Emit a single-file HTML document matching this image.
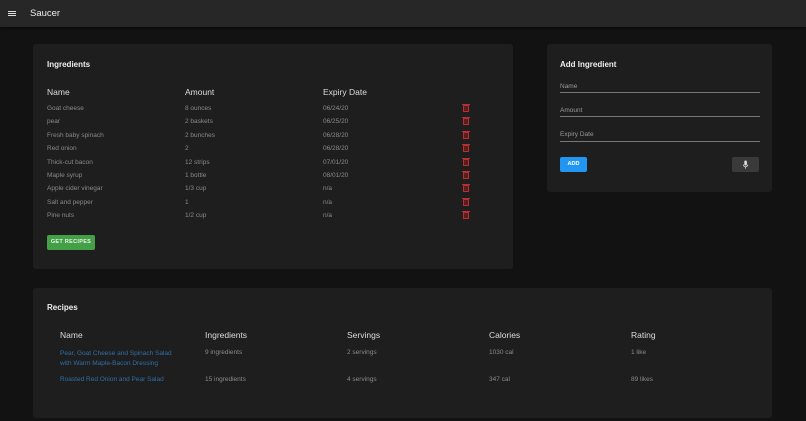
<!DOCTYPE html>
<html><head><style>
*{margin:0;padding:0;box-sizing:border-box}
body{width:806px;height:421px;background:#121212;font-family:"Liberation Sans",sans-serif;position:relative;overflow:hidden;color:#fff}
.hdr{position:absolute;left:0;top:0;width:806px;height:27px;background:#272727;box-shadow:0 1px 3px rgba(0,0,0,.6)}
.card{position:absolute;background:#1e1e1e;border-radius:3px}
.t{position:absolute;white-space:nowrap}
.h{font-size:8.5px;color:#ddd}
.c{font-size:6.5px;color:#8a8a8a}
.trash{position:absolute;width:6px;height:7px;border:1px solid #b83030;background:#5a1c1c}
.trash:before{content:"";position:absolute;left:-2px;top:-2.5px;width:8px;height:1px;background:#b83030}
.line{position:absolute;height:1px;background:#777}
</style></head><body>
<div class="hdr">
<div style="position:absolute;left:8px;top:11px;width:8px;height:1.2px;background:#ddd;box-shadow:0 2px 0 #ddd,0 4px 0 #ddd"></div>
<div class="t" style="left:30px;top:8px;font-size:9.5px;color:#eee">Saucer</div>
</div>

<div class="card" style="left:33px;top:44px;width:480px;height:225px"></div>
<div class="t" style="left:47px;top:60px;font-size:8px;font-weight:bold;color:#eee">Ingredients</div>
<div class="t h" style="left:47px;top:87px">Name</div>
<div class="t h" style="left:185px;top:87px">Amount</div>
<div class="t h" style="left:323px;top:87px">Expiry Date</div>

<div class="t c" style="left:47px;top:105px">Goat cheese</div><div class="t c" style="left:185px;top:105px">8 ounces</div><div class="t c" style="left:323px;top:105px">06/24/20</div><div class="trash" style="left:463px;top:105px"></div>
<div class="t c" style="left:47px;top:118px">pear</div><div class="t c" style="left:185px;top:118px">2 baskets</div><div class="t c" style="left:323px;top:118px">06/25/20</div><div class="trash" style="left:463px;top:118px"></div>
<div class="t c" style="left:47px;top:132px">Fresh baby spinach</div><div class="t c" style="left:185px;top:132px">2 bunches</div><div class="t c" style="left:323px;top:132px">06/28/20</div><div class="trash" style="left:463px;top:132px"></div>
<div class="t c" style="left:47px;top:145px">Red onion</div><div class="t c" style="left:185px;top:145px">2</div><div class="t c" style="left:323px;top:145px">06/28/20</div><div class="trash" style="left:463px;top:145px"></div>
<div class="t c" style="left:47px;top:159px">Thick-cut bacon</div><div class="t c" style="left:185px;top:159px">12 strips</div><div class="t c" style="left:323px;top:159px">07/01/20</div><div class="trash" style="left:463px;top:159px"></div>
<div class="t c" style="left:47px;top:172px">Maple syrup</div><div class="t c" style="left:185px;top:172px">1 bottle</div><div class="t c" style="left:323px;top:172px">08/01/20</div><div class="trash" style="left:463px;top:172px"></div>
<div class="t c" style="left:47px;top:185px">Apple cider vinegar</div><div class="t c" style="left:185px;top:185px">1/3 cup</div><div class="t c" style="left:323px;top:185px">n/a</div><div class="trash" style="left:463px;top:185px"></div>
<div class="t c" style="left:47px;top:199px">Salt and pepper</div><div class="t c" style="left:185px;top:199px">1</div><div class="t c" style="left:323px;top:199px">n/a</div><div class="trash" style="left:463px;top:199px"></div>
<div class="t c" style="left:47px;top:212px">Pine nuts</div><div class="t c" style="left:185px;top:212px">1/2 cup</div><div class="t c" style="left:323px;top:212px">n/a</div><div class="trash" style="left:463px;top:212px"></div>

<div style="position:absolute;left:47px;top:235px;width:48px;height:15px;background:#43a047;border-radius:2px;color:#e8f5e9;font-size:5.5px;font-weight:bold;text-align:center;line-height:15px;letter-spacing:.3px">GET RECIPES</div>

<div class="card" style="left:547px;top:44px;width:225px;height:148px"></div>
<div class="t" style="left:560px;top:60px;font-size:8px;font-weight:bold;color:#eee">Add Ingredient</div>
<div class="t c" style="left:560px;top:83px;color:#999">Name</div><div class="line" style="left:560px;top:92px;width:200px"></div>
<div class="t c" style="left:560px;top:107px;color:#999">Amount</div><div class="line" style="left:560px;top:116px;width:200px"></div>
<div class="t c" style="left:560px;top:131px;color:#999">Expiry Date</div><div class="line" style="left:560px;top:141px;width:200px"></div>
<div style="position:absolute;left:560px;top:157px;width:27px;height:15px;background:#2196f3;border-radius:2px;color:#fff;font-size:5.5px;font-weight:bold;text-align:center;line-height:15px">ADD</div>
<div style="position:absolute;left:732px;top:157px;width:27px;height:15px;background:#3a3a3a;border-radius:2px">
<svg width="27" height="15" viewBox="0 0 27 15"><rect x="12.3" y="3.5" width="2.6" height="5" rx="1.3" fill="#ddd"/><path d="M11.3 7.5a2.3 2.3 0 0 0 4.6 0M13.6 9.8v1.8" stroke="#ddd" stroke-width=".8" fill="none"/></svg>
</div>

<div class="card" style="left:33px;top:288px;width:739px;height:130px"></div>
<div class="t" style="left:47px;top:303px;font-size:8px;font-weight:bold;color:#eee">Recipes</div>
<div class="t h" style="left:60px;top:330px">Name</div>
<div class="t h" style="left:205px;top:330px">Ingredients</div>
<div class="t h" style="left:347px;top:330px">Servings</div>
<div class="t h" style="left:489px;top:330px">Calories</div>
<div class="t h" style="left:631px;top:330px">Rating</div>
<div class="t c" style="left:60px;top:349px;color:#2f6fa8;line-height:10px">Pear, Goat Cheese and Spinach Salad<br>with Warm Maple-Bacon Dressing</div>
<div class="t c" style="left:205px;top:349px">9 ingredients</div><div class="t c" style="left:347px;top:349px">2 servings</div><div class="t c" style="left:489px;top:349px">1030 cal</div><div class="t c" style="left:631px;top:349px">1 like</div>
<div class="t c" style="left:60px;top:376px;color:#2f6fa8">Roasted Red Onion and Pear Salad</div>
<div class="t c" style="left:205px;top:376px">15 ingredients</div><div class="t c" style="left:347px;top:376px">4 servings</div><div class="t c" style="left:489px;top:376px">347 cal</div><div class="t c" style="left:631px;top:376px">89 likes</div>
</body></html>
